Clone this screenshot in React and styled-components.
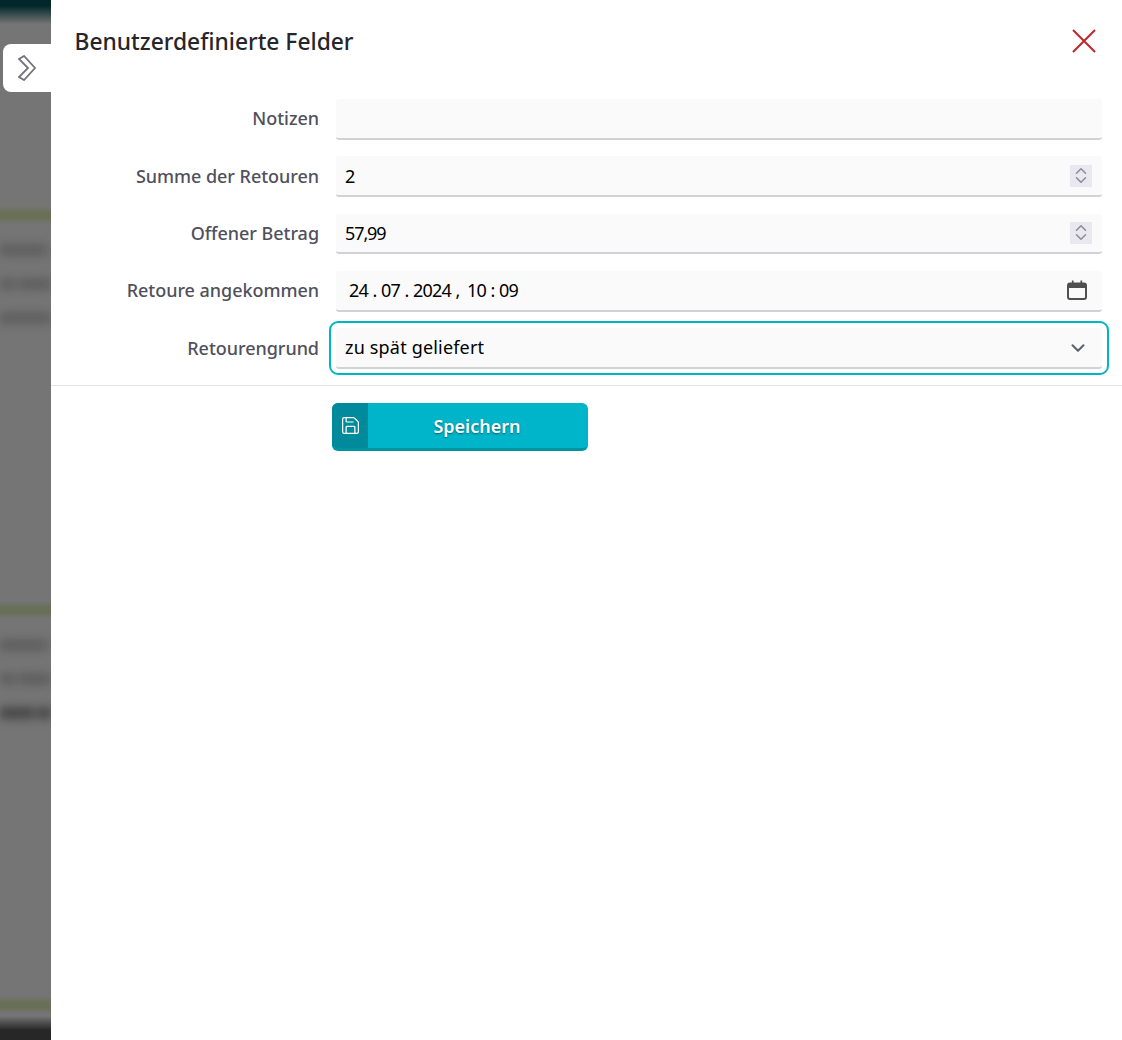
import React from "react";
import styled, { createGlobalStyle } from "styled-components";
import { Save, ChevronUp, ChevronDown } from "lucide-react";

const GlobalStyle = createGlobalStyle`
  html, body {
    margin: 0;
    padding: 0;
    background: #fff;
  }
  * {
    box-sizing: border-box;
  }
`;

const FONT = `"Noto Sans", "Open Sans", sans-serif`;

const App = () => {
  return (
    <Page>
      <GlobalStyle />
      <Backdrop>
        <BlurLayer>
          <TopBar />
          <Card>
            <GreenBand />
            <BlurLine $gap={47} />
            <BlurLine $gap={17} />
            <BlurLine $gap={60} />
          </Card>
          <Card>
            <GreenBand />
            <BlurLine $gap={47} />
            <BlurLine $gap={17} />
            <BlurLine $gap={36} $strong />
          </Card>
          <LastCard>
            <GreenBand />
          </LastCard>
          <BottomBar />
        </BlurLayer>
        <Toggle>
          <svg width="18" height="26" viewBox="0 0 18 26" fill="none">
            <path
              d="M1 4 L6 1 L17 13 L6 25 L1 22 L10 13 Z"
              stroke="#72727e"
              strokeWidth="1.8"
              strokeLinejoin="miter"
            />
          </svg>
        </Toggle>
      </Backdrop>
      <Panel>
        <Header>
          <Title>Benutzerdefinierte Felder</Title>
          <CloseButton>
            <svg width="24" height="24" viewBox="0 0 24 24" fill="none">
              <path d="M1 1 L23 23 M23 1 L1 23" stroke="#c0252b" strokeWidth="2" />
            </svg>
          </CloseButton>
        </Header>
        <Form>
          <Label>Notizen</Label>
          <Field />

          <Label>Summe der Retouren</Label>
          <Field>
            <Value>2</Value>
            <Spinner>
              <ChevronUp size={18} strokeWidth={2} />
              <ChevronDown size={18} strokeWidth={2} />
            </Spinner>
          </Field>

          <Label>Offener Betrag</Label>
          <Field>
            <Value $number>57,99</Value>
            <Spinner>
              <ChevronUp size={18} strokeWidth={2} />
              <ChevronDown size={18} strokeWidth={2} />
            </Spinner>
          </Field>

          <Label>Retoure angekommen</Label>
          <Field>
            <DateValue>
              <span>24</span>
              <span>.</span>
              <span>07</span>
              <span>.</span>
              <span>2024</span>
              <DateComma>,</DateComma>
              <span>10</span>
              <span>:</span>
              <span>09</span>
            </DateValue>
            <CalendarIcon width="20" height="20" viewBox="0 0 20 20" fill="none">
              <rect x="1" y="3.5" width="18" height="15.5" rx="2" stroke="#4f4f4f" strokeWidth="2" />
              <path d="M1 3.5 H19 V8 H1 Z" fill="#4f4f4f" />
              <path d="M5.7 0.5 V3.5 M14.3 0.5 V3.5" stroke="#4f4f4f" strokeWidth="1.7" />
            </CalendarIcon>
          </Field>

          <Label>Retourengrund</Label>
          <Field $focused>
            <Value $select>zu spät geliefert</Value>
            <SelectArrow>
              <ChevronDown size={22} strokeWidth={2.3} />
            </SelectArrow>
          </Field>
        </Form>
        <Divider />
        <Actions>
          <SaveButton>
            <SaveIcon>
              <Save size={21} strokeWidth={1.4} />
            </SaveIcon>
            <SaveLabel>Speichern</SaveLabel>
          </SaveButton>
        </Actions>
      </Panel>
    </Page>
  );
};

const Page = styled.div`
  display: flex;
  width: 1122px;
  height: 1040px;
  overflow: hidden;
  font-family: ${FONT};
`;

const Backdrop = styled.div`
  position: relative;
  flex: 0 0 51px;
  background: #757575;
`;

const BlurLayer = styled.div`
  display: flex;
  flex-direction: column;
  height: 1040px;
  overflow: hidden;
`;

const TopBar = styled.div`
  flex: 0 0 30px;
  background: linear-gradient(to bottom, #02272b 0, #03282c 6px, #757575 24px);
`;

const Card = styled.div`
  display: flex;
  flex-direction: column;
  flex: 0 0 395px;
  padding-top: 176px;
  gap: 22px;
`;

const LastCard = styled(Card)`
  flex: 0 0 196px;
`;

const GreenBand = styled.div`
  height: 18px;
  margin-bottom: -2px;
  background: linear-gradient(to bottom, #757575, #6a7058 35%, #6a7058 65%, #757575);
`;

const BlurLine = styled.div`
  height: 12px;
  background: linear-gradient(
    to right,
    ${(props) => (props.$strong ? "#474747" : "#5f5f5f")} ${(props) => props.$gap - 3}px,
    #757575 ${(props) => props.$gap}px,
    ${(props) => (props.$strong ? "#474747" : "#5f5f5f")} ${(props) => props.$gap + 3}px
  );
  filter: blur(5px);
`;

const BottomBar = styled.div`
  flex: 1;
  background: linear-gradient(to bottom, #757575 0, #272727 14px);
`;

const Toggle = styled.div`
  position: absolute;
  top: 44px;
  left: 3px;
  width: 48px;
  height: 48px;
  display: flex;
  align-items: center;
  justify-content: flex-start;
  padding-left: 15px;
  background: #fff;
  border-radius: 8px 0 0 8px;
`;

const Panel = styled.div`
  flex: 1;
  background: #fff;
  display: flex;
  flex-direction: column;
`;

const Header = styled.div`
  display: flex;
  align-items: center;
  justify-content: space-between;
  height: 82px;
  padding: 0 26px 0 24px;
`;

const Title = styled.h1`
  margin: 1px 0 0 -0.5px;
  font-size: 22.8px;
  font-weight: 500;
  color: #26262a;
`;

const CloseButton = styled.div`
  display: flex;
  width: 24px;
  height: 24px;
`;

const Form = styled.div`
  display: grid;
  grid-template-columns: 268px 766px;
  column-gap: 17px;
  row-gap: 16.67px;
  padding-top: 17px;
  align-items: center;
`;

const Label = styled.div`
  padding-bottom: 2px;
  text-align: right;
  font-size: 18px;
  font-weight: 500;
  letter-spacing: -0.04px;
  color: #50505c;
`;

const Field = styled.div`
  position: relative;
  display: flex;
  align-items: center;
  justify-content: space-between;
  height: 40.67px;
  padding: 0 10px 0 9px;
  background: #fafafa;
  border-bottom: 2px solid #d2d2d6;
  border-radius: 3px;
  ${(props) =>
    props.$focused &&
    `
    &::after {
      content: "";
      position: absolute;
      inset: -7px -7px -8px;
      border: 2px solid #00b5c9;
      border-radius: 9px;
      pointer-events: none;
    }
  `}
`;

const Value = styled.span`
  padding-bottom: ${(props) => (props.$select ? "2px" : "0")};
  font-size: 18px;
  color: #000;
  letter-spacing: ${(props) =>
    props.$number ? "-1.1px" : props.$select ? "0.18px" : "0"};
`;

const DateValue = styled.div`
  display: flex;
  gap: 4.5px;
  padding-left: 4px;
  font-size: 18px;
  letter-spacing: -0.8px;
  color: #000;
`;

const DateComma = styled.span`
  margin-right: 3px;
`;

const Spinner = styled.div`
  display: flex;
  flex-direction: column;
  align-items: center;
  justify-content: center;
  width: 22px;
  height: 22px;
  background: #e8e8ee;
  color: #8b8b98;
  svg {
    margin: -4.5px 0;
  }
`;

const CalendarIcon = styled.svg`
  margin-right: 5px;
`;

const SelectArrow = styled.div`
  display: flex;
  margin-right: 3px;
  color: #5d6270;
`;

const Divider = styled.div`
  height: 1px;
  margin-top: 16px;
  background: #e4e4e6;
`;

const Actions = styled.div`
  padding: 17px 0 0 281px;
`;

const SaveButton = styled.div`
  display: flex;
  width: 256px;
  height: 48px;
  overflow: hidden;
  background: #00b5c9;
  border-bottom: 3px solid #0093a4;
  border-radius: 6px;
`;

const SaveIcon = styled.div`
  display: flex;
  align-items: center;
  justify-content: center;
  flex: 0 0 36px;
  padding-top: 1px;
  background: #008a9b;
  color: #fff;
`;

const SaveLabel = styled.div`
  flex: 1;
  display: flex;
  align-items: center;
  justify-content: center;
  padding: 2px 2px 0 0;
  font-size: 18px;
  font-weight: 600;
  color: #fff;
  text-shadow: 0 1px 2px rgba(0, 0, 0, 0.45);
`;

export default App;
